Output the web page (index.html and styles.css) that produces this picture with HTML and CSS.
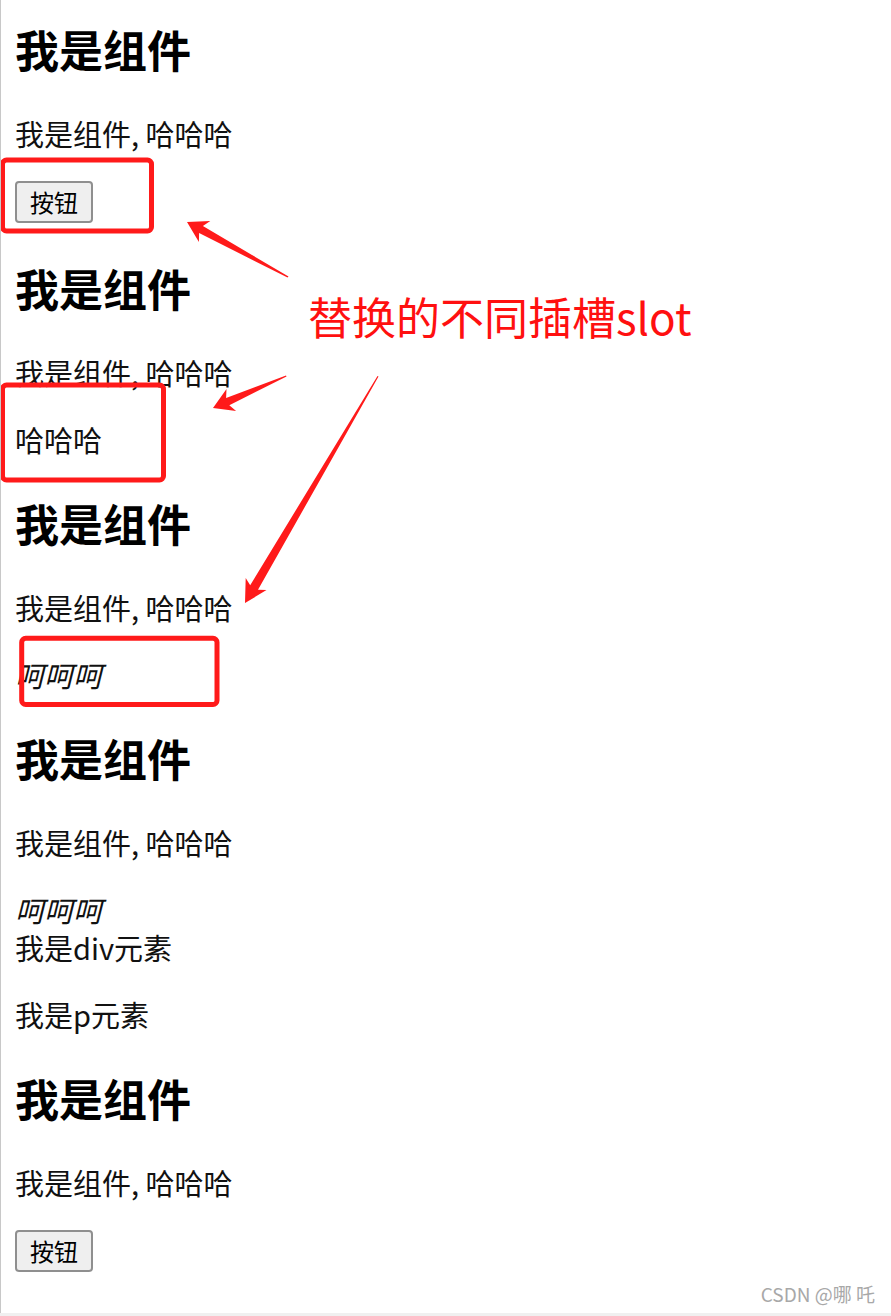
FILE: index.html
```html
<!DOCTYPE html>
<html lang="zh-CN">
<head>
<meta charset="utf-8">
<title>slot</title>
<link rel="stylesheet" href="styles.css">
</head>
<body>
<div class="page">
  <section class="comp">
    <h2 class="title">我是组件</h2>
    <p class="text">我是组件, 哈哈哈</p>
    <div class="slot"><button class="btn">按钮</button></div>
  </section>
  <section class="comp">
    <h2 class="title">我是组件</h2>
    <p class="text">我是组件, 哈哈哈</p>
    <div class="slot"><p class="text">哈哈哈</p></div>
  </section>
  <section class="comp">
    <h2 class="title">我是组件</h2>
    <p class="text">我是组件, 哈哈哈</p>
    <div class="slot line"><i>呵呵呵</i></div>
  </section>
  <section class="comp">
    <h2 class="title">我是组件</h2>
    <p class="text">我是组件, 哈哈哈</p>
    <div class="slot line"><i>呵呵呵</i><div>我是div元素</div><p class="text">我是p元素</p></div>
  </section>
  <section class="comp">
    <h2 class="title">我是组件</h2>
    <p class="text">我是组件, 哈哈哈</p>
    <div class="slot"><button class="btn">按钮</button></div>
  </section>

  <svg class="marks" width="891" height="1316" viewBox="0 0 891 1316">
    <g fill="none" stroke="#ff1a1a" stroke-width="5">
      <rect x="2.5" y="160" width="149" height="71" rx="4"/>
      <rect x="2.5" y="385" width="161" height="95" rx="4"/>
      <rect x="21.7" y="638.3" width="195.3" height="66.2" rx="4"/>
    </g>
    <g fill="#ff1a1a">
      <polygon points="187,222 210.3,221.1 202.9,226.1 288.5,276.5 287.5,277.5 199.1,233.1 198.9,242.1"/>
      <polygon points="213,408 226.5,389 226.1,397.9 286,375.5 286.5,376.5 229.3,405.3 236.1,411"/>
      <polygon points="245,603 245.7,577.9 250.2,585.2 377.5,376 378.5,376.5 258,589.8 266.5,590.1"/>
    </g>
  </svg>
  <div class="note">替换的不同插槽slot</div>
  <div class="watermark">CSDN @哪 吒</div>
</div>
</body>
</html>
```

FILE: styles.css
```css
html {
  background: #f0f0f0;
}
body {
  margin: 0;
  font-family: "Noto Sans CJK SC", "Noto Sans", sans-serif;
  color: #111;
}
.page {
  position: relative;
  box-sizing: border-box;
  width: 891px;
  height: 1313px;
  padding: 20px 0 0 14px;
  background: #fff;
  border-left: 1px solid #c8c8c8;
  overflow: hidden;
}
.title {
  margin: 36px 0;
  font-size: 44px;
  line-height: 58px;
  font-weight: 700;
  color: #000;
}
.comp:first-child .title {
  margin-top: 0;
}
.text {
  margin: 29px 0;
  font-size: 29px;
  line-height: 38px;
}
.slot {
  font-size: 29px;
  line-height: 38px;
}
.slot .text:last-child {
  margin-bottom: 36px;
}
.slot.line {
  margin-bottom: 36px;
}
.slot.line .text:last-child {
  margin-bottom: 0;
}
.btn {
  display: block;
  box-sizing: border-box;
  width: 78px;
  height: 42px;
  margin: 0 0 36px 0;
  padding: 0;
  font-family: "Noto Sans CJK SC", sans-serif;
  font-size: 24px;
  line-height: 1;
  color: #000;
  background: #efefef;
  border: 2px solid #8f8f8f;
  border-radius: 4px;
}
.marks {
  position: absolute;
  left: -1px;
  top: 0;
}
.note {
  position: absolute;
  left: 307px;
  top: 294px;
  font-size: 44px;
  line-height: 1;
  color: #ff1010;
  white-space: nowrap;
}
.watermark {
  position: absolute;
  right: 16px;
  top: 1284px;
  font-size: 19px;
  line-height: 1;
  color: #a8a8a8;
  white-space: nowrap;
}
```
